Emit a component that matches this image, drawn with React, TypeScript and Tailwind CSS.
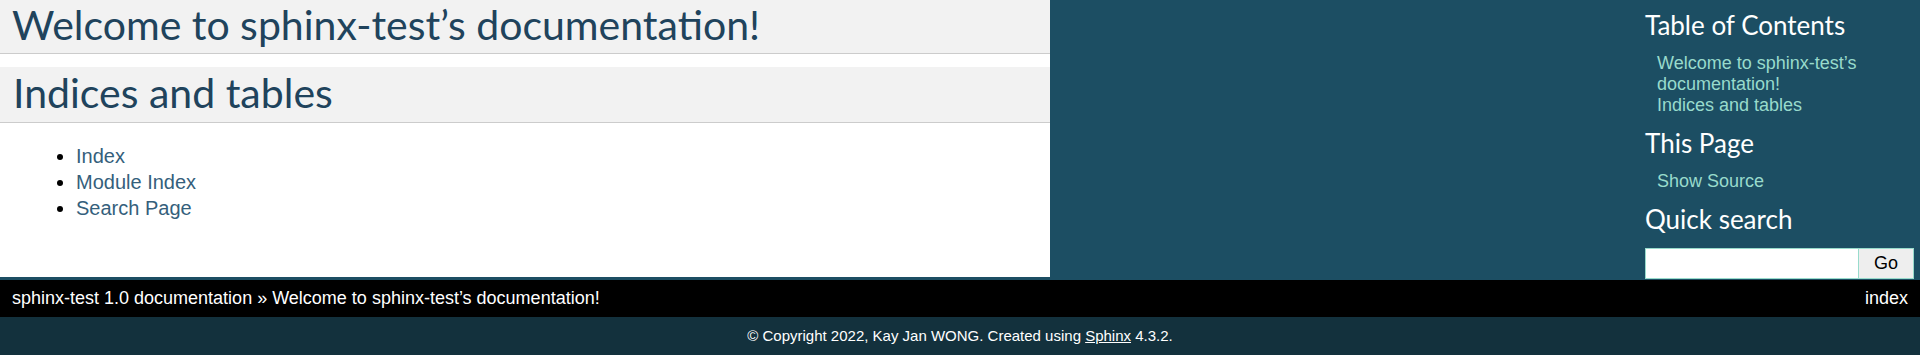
export default function App() {
  return (
    <div className="w-full h-[355px] overflow-hidden bg-[#1c4e63] font-['Liberation_Sans',Arial,sans-serif] flex flex-col">
      <div className="flex h-[280px] shrink-0">
        {/* document body */}
        <div className="w-[1050px] h-[277px] bg-white shrink-0">
          <h1 className="h-[54px] bg-[#f2f2f2] border-b border-[#cccccc] pl-[12px] text-[41px] leading-[50px] font-normal text-[#20435c] font-['Lato',sans-serif]">
            Welcome to sphinx-test’s documentation!
          </h1>
          <h2 className="mt-[13px] h-[56px] bg-[#f2f2f2] border-b border-[#cccccc] pl-[13px] text-[41px] leading-[51px] font-normal text-[#20435c] font-['Lato',sans-serif]">
            Indices and tables
          </h2>
          <ul className="mt-[20px] pl-[76px] list-disc text-[20px] leading-[26px] text-black">
            <li>
              <a href="#" className="text-[#355f7c]">Index</a>
            </li>
            <li>
              <a href="#" className="text-[#355f7c]">Module Index</a>
            </li>
            <li>
              <a href="#" className="text-[#355f7c]">Search Page</a>
            </li>
          </ul>
        </div>
        <div className="flex-1" />
        {/* sidebar */}
        <div className="w-[275px] shrink-0 pt-[10px] pr-[6px] text-white">
          <h3 className="text-[26px] leading-[30px] font-['Lato',sans-serif]">Table of Contents</h3>
          <ul className="mt-[13px] pl-[12px] text-[18px] leading-[21px]">
            <li>
              <a href="#" className="text-[#98dbcc]">Welcome to sphinx-test’s documentation!</a>
            </li>
            <li>
              <a href="#" className="text-[#98dbcc]">Indices and tables</a>
            </li>
          </ul>
          <h3 className="mt-[12px] text-[26px] leading-[30px] font-['Lato',sans-serif]">This Page</h3>
          <ul className="mt-[13px] pl-[12px] text-[18px] leading-[21px]">
            <li>
              <a href="#" className="text-[#98dbcc]">Show Source</a>
            </li>
          </ul>
          <h3 className="mt-[12px] text-[26px] leading-[30px] font-['Lato',sans-serif]">Quick search</h3>
          <form className="mt-[14px] flex">
            <input type="text" className="w-[214px] h-[31px] bg-white border border-[#98dbcc] outline-none" />
            <button type="button" className="w-[55px] h-[31px] bg-[#eeeeee] border border-l-0 border-[#98dbcc] text-[18px] text-black">
              Go
            </button>
          </form>
        </div>
      </div>

      {/* related bar */}
      <div className="h-[37px] shrink-0 bg-black text-white text-[18px] leading-[37px] flex justify-between px-[12px]">
        <div>
          <a href="#">sphinx-test 1.0 documentation</a> » <a href="#">Welcome to sphinx-test’s documentation!</a>
        </div>
        <a href="#">index</a>
      </div>

      {/* footer */}
      <div className="flex-1 bg-[#13313d] text-white text-[15px] leading-[38px] text-center">
        © Copyright 2022, Kay Jan WONG. Created using <a href="#" className="underline">Sphinx</a> 4.3.2.
      </div>
    </div>
  );
}
